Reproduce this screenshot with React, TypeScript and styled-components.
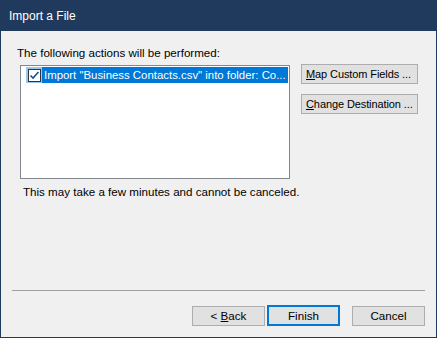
import React from 'react'
import styled, { createGlobalStyle } from 'styled-components'

const GlobalStyle = createGlobalStyle`
  html, body {
    margin: 0;
    padding: 0;
    background: #f0f0f0;
  }
  * {
    box-sizing: border-box;
  }
`

const Window = styled.div`
  width: 437px;
  height: 338px;
  display: flex;
  flex-direction: column;
  background: #f0f0f0;
  border: 1px solid #1f3a5c;
  border-top: none;
  font-family: 'Liberation Sans', Arial, sans-serif;
  font-size: 11.6px;
  color: #000;
`

const TitleBar = styled.div`
  height: 31px;
  flex: none;
  margin: 0 -1px;
  padding-left: 9px;
  display: flex;
  align-items: center;
  background: #1f3a5c;
  color: #fff;
  font-size: 12px;
`

const Body = styled.div`
  flex: 1;
  display: flex;
  flex-direction: column;
  padding: 0 11px 11px 11px;
`

const Label = styled.div`
  line-height: 16px;
  margin: 14px 0 4px 5px;
`

const Row = styled.div`
  display: flex;
  gap: 11px;
  margin-left: 8px;
`

const ListBox = styled.div`
  width: 270px;
  height: 114px;
  flex: none;
  background: #fff;
  border: 1px solid #828790;
  padding: 1px 1px 0 5px;
`

const ListItem = styled.div`
  height: 16px;
  display: flex;
  align-items: center;
  background: #0078d7;
  color: #fff;
  white-space: nowrap;
  overflow: hidden;
  font-size: 11.4px;
`

const CheckZone = styled.div`
  width: 16px;
  height: 16px;
  flex: none;
  display: flex;
  align-items: center;
  justify-content: center;
  background: #99c9ef;
  margin-right: 2px;
`

const CheckBox = styled.div`
  width: 13px;
  height: 13px;
  background: #fff;
  border: 1px solid #333;
  display: flex;
  align-items: center;
  justify-content: center;
`

const SideButtons = styled.div`
  display: flex;
  flex-direction: column;
  gap: 10px;
  margin-top: -1px;
`

const Button = styled.button<{ $width: number; $default?: boolean }>`
  width: ${({ $width }) => $width}px;
  height: ${({ $default }) => ($default ? 21 : 20)}px;
  padding: 0;
  background: #e1e1e1;
  border: ${({ $default }) => ($default ? '2px solid #0078d7' : '1px solid #adadad')};
  font-family: inherit;
  font-size: 11.6px;
  color: #000;
  line-height: 1;
  text-align: center;
  white-space: nowrap;
`

const SideButton = styled(Button)`
  text-align: left;
  padding-left: 4px;
  font-size: 11px;
  letter-spacing: -0.1px;
  overflow: hidden;
`

const Note = styled.div`
  line-height: 16px;
  margin: 5px 0 0 11px;
`

const Spacer = styled.div`
  flex: 1;
`

const Separator = styled.div`
  height: 1px;
  background: #a0a0a0;
`

const Footer = styled.div`
  display: flex;
  justify-content: flex-end;
  align-items: center;
  margin-top: 14px;
  gap: 2px;
`

const CancelWrap = styled.div`
  margin-left: 10px;
`

const Check = () => (
  <svg width="11" height="11" viewBox="0 0 11 11">
    <path d="M1.5 5.5 L4 8 L9.5 2" fill="none" stroke="#1c4f91" strokeWidth="1.6" />
  </svg>
)

export default function App() {
  return (
    <>
      <GlobalStyle />
      <Window>
        <TitleBar>Import a File</TitleBar>
        <Body>
          <Label>The following actions will be performed:</Label>
          <Row>
            <ListBox>
              <ListItem>
                <CheckZone>
                  <CheckBox>
                    <Check />
                  </CheckBox>
                </CheckZone>
                Import "Business Contacts.csv" into folder: Co...
              </ListItem>
            </ListBox>
            <SideButtons>
              <SideButton $width={117}>
                <u>M</u>ap Custom Fields ...
              </SideButton>
              <SideButton $width={117}>
                <u>C</u>hange Destination ...
              </SideButton>
            </SideButtons>
          </Row>
          <Note>This may take a few minutes and cannot be canceled.</Note>
          <Spacer />
          <Separator />
          <Footer>
            <Button $width={73}>
              &lt; <u>B</u>ack
            </Button>
            <Button $width={73} $default>
              Finish
            </Button>
            <CancelWrap>
              <Button $width={73}>Cancel</Button>
            </CancelWrap>
          </Footer>
        </Body>
      </Window>
    </>
  )
}
